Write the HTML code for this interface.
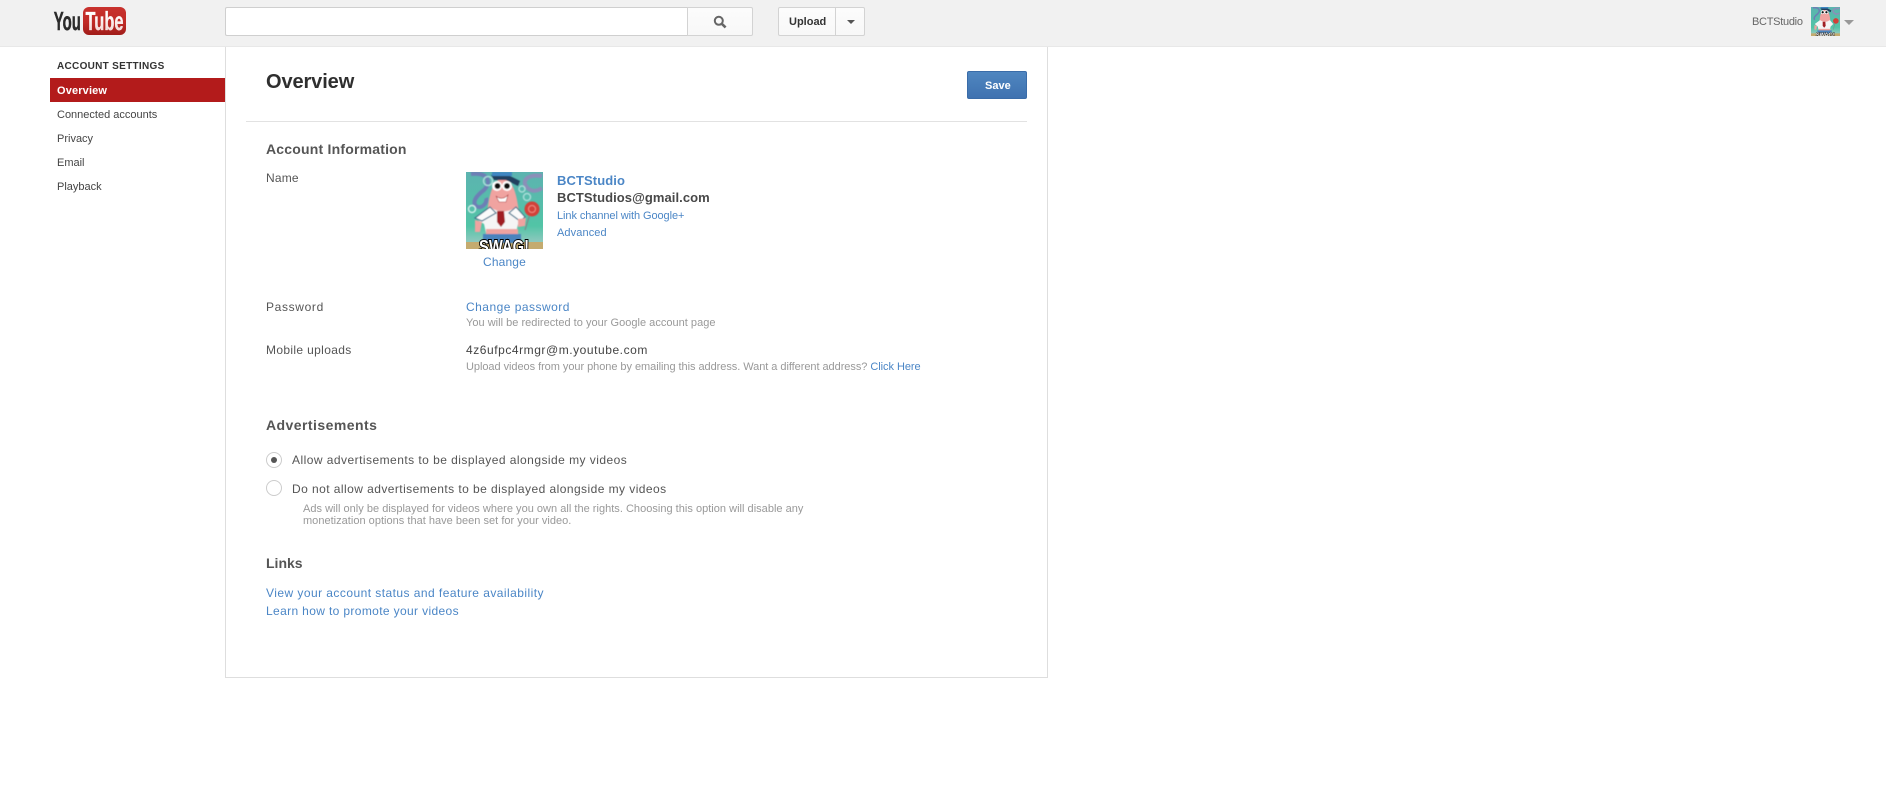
<!DOCTYPE html>
<html><head><meta charset="utf-8"><title>Account Settings</title>
<style>
html,body{margin:0;padding:0;background:#fff;width:1886px;height:807px;overflow:hidden;font-family:"Liberation Sans",Arial,sans-serif;color:#555}
.t{position:absolute;white-space:nowrap;height:16px;line-height:16px;font-size:12px}
.b{font-weight:bold}
a,.l{color:#4b86c6;text-decoration:none}
.box{position:absolute;box-sizing:border-box}
.btn{background:linear-gradient(#fcfcfc,#f8f8f8);border:1px solid #d3d3d3}
.sub{font-size:11px;color:#999}
</style></head><body>
<div class="box" style="left:0;top:0;width:1886px;height:47px;background:#f1f1f1;border-bottom:1px solid #e8e8e8"></div>

<svg class="box" style="left:52px;top:5px" width="76" height="32" viewBox="0 0 76 32">
<defs><linearGradient id="r" x1="0" y1="0" x2="0" y2="1"><stop offset="0" stop-color="#c8322e"/><stop offset=".55" stop-color="#c02a26"/><stop offset="1" stop-color="#a01d1a"/></linearGradient>
<linearGradient id="w" x1="0" y1="0" x2="0" y2="1"><stop offset=".3" stop-color="#fff"/><stop offset="1" stop-color="#f0c8c6"/></linearGradient></defs>
<text x="1.8" y="25" font-family="Liberation Sans" font-weight="bold" font-size="26" fill="#2b2b2b" stroke="#2b2b2b" stroke-width=".5" textLength="27" lengthAdjust="spacingAndGlyphs">You</text>
<rect x="31" y="2" width="43" height="28" rx="6" fill="url(#r)"/>
<text x="33.500" y="25" font-family="Liberation Sans" font-weight="bold" font-size="26" fill="url(#w)" stroke="#fff" stroke-width=".3" textLength="38" lengthAdjust="spacingAndGlyphs">Tube</text>
</svg>

<div class="box" style="left:225px;top:7px;width:463px;height:29px;background:#fff;border:1px solid #cfcfcf;border-right:0;border-radius:2px 0 0 2px"></div>
<div class="box btn" style="left:687px;top:7px;width:66px;height:29px;border-radius:0 2px 2px 0"></div>
<svg class="box" style="left:713px;top:15px" width="14" height="14" viewBox="0 0 14 14"><circle cx="5.800" cy="5.800" r="4" fill="none" stroke="#666" stroke-width="2"/><path d="M8.800 8.800L12.600 12.400" stroke="#666" stroke-width="2.600"/></svg>

<div class="box btn" style="left:778px;top:7px;width:58px;height:29px;border-radius:2px 0 0 2px"></div>
<div class="box btn" style="left:835px;top:7px;width:30px;height:29px;border-radius:0 2px 2px 0"></div>
<div class="t b" style="left:789px;top:14px;font-size:11px;color:#333">Upload</div>
<div class="box" style="left:847px;top:20px;width:0;height:0;border:4px solid transparent;border-top:4px solid #555;border-bottom:0"></div>

<div class="t" style="left:1752px;top:14px;font-size:11px;color:#666;letter-spacing:-.28px">BCTStudio</div>
<svg class="box" style="left:1811px;top:7px" width="29" height="29" viewBox="0 0 77 77">
<defs><linearGradient id="bg2" x1="0" y1="0" x2="0" y2="1"><stop offset="0" stop-color="#5cb3b0"/><stop offset=".7" stop-color="#52c4a6"/><stop offset=".9" stop-color="#8cc8bd"/></linearGradient></defs>
<rect width="77" height="77" fill="url(#bg2)"/><rect y="70" width="77" height="7" fill="#c4ab6f"/>
<path d="M5 2C22 0 26 10 18 18 10 24 6 30 10 34" fill="none" stroke="#6d7fb5" stroke-width="4"/><path d="M76 4C62 2 56 8 60 14 64 20 70 20 76 16" fill="none" stroke="#8b8fb8" stroke-width="4"/>
<path d="M22 42C24 22 26 8 37 6 47 8 50 20 52 42Z" fill="#f0a3a0"/><path d="M25 3L40 2 54 9 52 14 40 8 28 8Z" fill="#24415f"/><rect x="26" y="0" width="20" height="4" fill="#3f86c2"/>
<circle cx="31" cy="14" r="5" fill="#fff"/><circle cx="41" cy="14" r="5" fill="#fff"/><circle cx="31" cy="14" r="3" fill="#111"/><circle cx="41" cy="14" r="3" fill="#111"/>
<path d="M10 45L24 35Q37 44 50 35L59 45 52 52 50 61H20L18 52Z" fill="#f5f5f5"/><path d="M31 39H38L39 50 35 55 31 50Z" fill="#a01f24"/>
<path d="M9 48L16 50 14 60 9 60Z" fill="#f0a3a0"/><rect x="20" y="58" width="32" height="5" fill="#eea3a0"/><path d="M17 62H55V71H17Z" fill="#4a83bd"/>
<path d="M64 42L59 60" stroke="#7a8a8a" stroke-width="1.500"/><circle cx="66" cy="37" r="7.500" fill="#d33f38"/>
<text x="38" y="80" text-anchor="middle" font-family="Liberation Sans" font-weight="bold" font-size="18" fill="#fff" stroke="#000" stroke-width="2" paint-order="stroke" textLength="50" lengthAdjust="spacingAndGlyphs">SWAG!</text>
</svg>
<div class="box" style="left:1844px;top:20px;width:0;height:0;border:5px solid transparent;border-top:5px solid #999;border-bottom:0"></div>

<div class="t b" style="left:57px;top:59px;font-size:10px;color:#333;letter-spacing:.3px">ACCOUNT SETTINGS</div>
<div class="box" style="left:50px;top:78px;width:175px;height:24px;background:#b31b1b"></div>
<div class="t b" style="left:57px;top:83px;font-size:11px;color:#fff;letter-spacing:.15px">Overview</div>
<div class="t" style="left:57px;top:107px;font-size:11px;color:#444">Connected accounts</div>
<div class="t" style="left:57px;top:131px;font-size:11px;color:#444">Privacy</div>
<div class="t" style="left:57px;top:155px;font-size:11px;color:#444">Email</div>
<div class="t" style="left:57px;top:179px;font-size:11px;color:#444">Playback</div>

<div class="box" style="left:225px;top:47px;width:823px;height:631px;background:#fff;border:1px solid #dedede;border-top:0"></div>
<div class="t b" style="left:266px;top:71px;height:22px;line-height:22px;font-size:20px;color:#2f2f2f;letter-spacing:-.1px">Overview</div>
<div class="box" style="left:967px;top:71px;width:60px;height:28px;background:linear-gradient(#4f86c0,#3f72b0);border:1px solid #3a6ca8;border-radius:2px"></div>
<div class="t b" style="left:985px;top:78px;font-size:11px;color:#fff">Save</div>
<div class="box" style="left:246px;top:121px;width:781px;height:1px;background:#e2e2e2"></div>

<div class="t b" style="left:266px;top:141px;font-size:14px;color:#555;letter-spacing:.2px">Account Information</div>
<div class="t" style="left:266px;top:170px;color:#555;letter-spacing:.2px">Name</div>

<svg class="box" style="left:466px;top:172px" width="77" height="77" viewBox="0 0 77 77">
<defs><linearGradient id="bg" x1="0" y1="0" x2="0" y2="1"><stop offset="0" stop-color="#5cb3b0"/><stop offset=".7" stop-color="#52c4a6"/><stop offset=".9" stop-color="#8cc8bd"/></linearGradient>
<filter id="soft" x="-5%" y="-5%" width="110%" height="110%"><feGaussianBlur stdDeviation=".5"/></filter></defs>
<rect width="77" height="77" fill="url(#bg)"/><rect y="70" width="77" height="7" fill="#c4ab6f"/>
<g filter="url(#soft)">
<path d="M5 2C22 0 26 10 18 18 10 24 6 30 10 34 16 38 22 30 20 26" fill="none" stroke="#6d7fb5" stroke-width="4"/>
<path d="M76 4C62 2 56 8 60 14 64 20 70 20 76 16" fill="none" stroke="#8b8fb8" stroke-width="4"/>
<circle cx="22" cy="9" r="4.500" fill="none" stroke="#a8dcd8" stroke-width="1.500"/><circle cx="56" cy="17" r="3" fill="none" stroke="#a8dcd8" stroke-width="1.500"/><circle cx="61" cy="25" r="3.500" fill="none" stroke="#a8dcd8" stroke-width="1.500"/><circle cx="6" cy="37" r="3.500" fill="none" stroke="#cfeeea" stroke-width="1.500"/>
<path d="M21 42C23 24 26 8 37 6 47 8 51 22 53 42Z" fill="#f0a3a0"/>
<path d="M25 3L40 2 54 9 52 14 40 8 28 8Z" fill="#24415f"/><rect x="26" y="0" width="20" height="4" fill="#3f86c2"/>
<circle cx="31" cy="14" r="5" fill="#fff"/><circle cx="41" cy="14" r="5" fill="#fff"/><circle cx="31.500" cy="14" r="3" fill="#111"/><circle cx="41" cy="14" r="3" fill="#111"/>
<path d="M30 24Q36 29 42 23L40 30H33Z" fill="#fff" stroke="#a33" stroke-width=".6"/>
<path d="M9 46L24 35Q37 44 50 35L59 45 52 52 50 61H20L18 52Z" fill="#f5f5f5"/>
<path d="M9 46L24 35 30 41 16 49ZM59 45L50 35 43 41 54 49Z" fill="#fafafa" stroke="#3d6f8a" stroke-width="1.100"/>
<path d="M31 39H38L39 50 35 55 31 50Z" fill="#a01f24"/>
<path d="M9 48L16 50 14 60 9 60Z" fill="#f0a3a0"/><path d="M52 47L60 46 59 54 52 55Z" fill="#f0a3a0"/>
<rect x="20" y="57" width="32" height="6" fill="#eea3a0"/><path d="M17 62H55V71H17Z" fill="#4a83bd"/>
<path d="M64 42L59 58" stroke="#7a8a8a" stroke-width="1.200"/>
<circle cx="66" cy="37" r="7.500" fill="#d33f38"/><circle cx="66" cy="37" r="3.500" fill="none" stroke="#f08a80" stroke-width="1"/>
</g>
<text x="38" y="81" text-anchor="middle" font-family="Liberation Sans" font-weight="bold" font-size="18" fill="#fff" stroke="#000" stroke-width="2" paint-order="stroke" textLength="50" lengthAdjust="spacingAndGlyphs">SWAG!</text>
</svg>

<a class="t" style="left:483px;top:254px;font-size:12px;letter-spacing:.15px;color:#4b86c6">Change</a>
<a class="t b" style="left:557px;top:173px;font-size:13px;color:#4b86c6;letter-spacing:.1px">BCTStudio</a>
<div class="t b" style="left:557px;top:190px;font-size:13px;color:#484848;letter-spacing:.07px">BCTStudios@gmail.com</div>
<a class="t" style="left:557px;top:208px;font-size:11px;color:#4b86c6;letter-spacing:-.08px">Link channel with Google+</a>
<a class="t" style="left:557px;top:225px;font-size:11px;color:#4b86c6;letter-spacing:.1px">Advanced</a>

<div class="t" style="left:266px;top:299px;color:#555;letter-spacing:.65px">Password</div>
<a class="t" style="left:466px;top:299px;font-size:12px;color:#4b86c6;letter-spacing:.48px">Change password</a>
<div class="t sub" style="left:466px;top:315px;font-size:11px;letter-spacing:.02px">You will be redirected to your Google account page</div>
<div class="t" style="left:266px;top:342px;color:#555;letter-spacing:.35px">Mobile uploads</div>
<div class="t" style="left:466px;top:342px;font-size:12px;color:#444;letter-spacing:.55px">4z6ufpc4rmgr@m.youtube.com</div>
<div class="t sub" style="left:466px;top:359px;font-size:11px;letter-spacing:-.05px">Upload videos from your phone by emailing this address. Want a different address? <span style="color:#4b86c6">Click Here</span></div>

<div class="t b" style="left:266px;top:417px;font-size:14px;color:#555;letter-spacing:.45px">Advertisements</div>
<div class="box" style="left:266px;top:452px;width:16px;height:16px;border-radius:50%;background:#fff;border:1px solid #ccc"></div>
<div class="box" style="left:271px;top:457px;width:6px;height:6px;border-radius:50%;background:#555"></div>
<div class="t" style="left:292px;top:452px;color:#555;letter-spacing:.46px">Allow advertisements to be displayed alongside my videos</div>
<div class="box" style="left:266px;top:480px;width:16px;height:16px;border-radius:50%;background:#fff;border:1px solid #ccc"></div>
<div class="t" style="left:292px;top:481px;color:#555;letter-spacing:.44px">Do not allow advertisements to be displayed alongside my videos</div>
<div class="t sub" style="left:303px;top:501px;font-size:11px;letter-spacing:.02px">Ads will only be displayed for videos where you own all the rights. Choosing this option will disable any</div>
<div class="t sub" style="left:303px;top:513px;font-size:11px;letter-spacing:.02px">monetization options that have been set for your video.</div>

<div class="t b" style="left:266px;top:555px;font-size:14px;color:#555">Links</div>
<a class="t" style="left:266px;top:585px;color:#4b86c6;letter-spacing:.45px">View your account status and feature availability</a>
<a class="t" style="left:266px;top:603px;color:#4b86c6;letter-spacing:.36px">Learn how to promote your videos</a>
</body></html>
